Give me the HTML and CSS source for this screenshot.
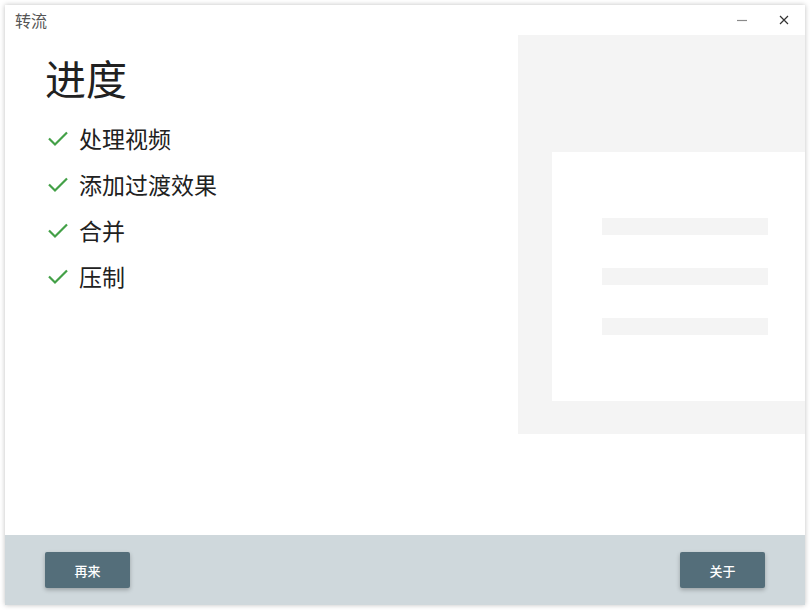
FILE: index.html
```html
<!DOCTYPE html>
<html lang="zh">
<head>
    <meta charset="UTF-8">
    <title>转流</title>
    <link rel="stylesheet" href="styles.css">
</head>
<body>
    <div class="window">
        <div class="titlebar">
            <span class="title">转流</span>
            <div class="controls">
                <span class="ctl ctl-min"><svg width="12" height="12" viewBox="0 0 12 12"><line x1="1" y1="6.5" x2="11" y2="6.5" stroke="#8a8a8a" stroke-width="1.2"/></svg></span>
                <span class="ctl ctl-close"><svg width="12" height="12" viewBox="0 0 12 12"><path d="M2 2 L10 10 M10 2 L2 10" stroke="#333" stroke-width="1.2"/></svg></span>
            </div>
        </div>

        <div class="main">
            <div class="progress">
                <h1>进度</h1>
                <ul class="steps">
                    <li><svg class="check" viewBox="0 0 24 24"><path d="M3 12.5 L9 18.5 L21 6.5" fill="none" stroke="#43a047" stroke-width="2.2"/></svg>处理视频</li>
                    <li><svg class="check" viewBox="0 0 24 24"><path d="M3 12.5 L9 18.5 L21 6.5" fill="none" stroke="#43a047" stroke-width="2.2"/></svg>添加过渡效果</li>
                    <li><svg class="check" viewBox="0 0 24 24"><path d="M3 12.5 L9 18.5 L21 6.5" fill="none" stroke="#43a047" stroke-width="2.2"/></svg>合并</li>
                    <li><svg class="check" viewBox="0 0 24 24"><path d="M3 12.5 L9 18.5 L21 6.5" fill="none" stroke="#43a047" stroke-width="2.2"/></svg>压制</li>
                </ul>
            </div>

            <!-- aperçu -->
            <div class="preview">
                <div class="card">
                    <div class="bar"></div>
                    <div class="bar"></div>
                    <div class="bar"></div>
                </div>
            </div>
        </div>

        <div class="footer">
            <button class="btn">再来</button>
            <button class="btn">关于</button>
        </div>
    </div>
</body>
</html>
```

FILE: styles.css
```css
body {
    margin: 0;
    padding: 5px;
    background-color: #fff;
    font-family: "Noto Sans CJK SC", "Noto Sans", sans-serif;
}
.window {
    width: 800px;
    height: 600px;
    display: flex;
    flex-direction: column;
    background-color: #fff;
    box-shadow: 0 0 5px rgba(0, 0, 0, 0.25);
}
.titlebar {
    height: 30px;
    display: flex;
    align-items: center;
    justify-content: space-between;
    padding-left: 10px;
}
.title {
    font-size: 16px;
    color: #555;
}
.controls {
    display: flex;
    height: 100%;
}
.ctl {
    width: 42px;
    display: flex;
    align-items: center;
    justify-content: center;
}
.main {
    flex: 1;
    display: flex;
    justify-content: space-between;
}
.progress {
    padding: 12px 0 0 40px;
}
h1 {
    margin: 0 0 8px 0;
    font-size: 41px;
    font-weight: normal;
    color: #212121;
    line-height: 60px;
}
.steps {
    list-style: none;
    margin: 0;
    padding: 0;
}
.steps li {
    display: flex;
    align-items: center;
    height: 46px;
    font-size: 23px;
    color: #212121;
}
.check {
    width: 24px;
    height: 24px;
    margin: 0 9px 0 1px;
}
.preview {
    width: 287px;
    height: 399px;
    box-sizing: border-box;
    padding: 117px 0 33px 34px;
    background-color: #f4f4f4;
}
.card {
    height: 100%;
    box-sizing: border-box;
    padding: 66px 0 0 50px;
    background-color: #fff;
    display: flex;
    flex-direction: column;
    gap: 33px;
}
.bar {
    width: 166px;
    height: 17px;
    background-color: #f4f4f4;
}
.footer {
    height: 70px;
    background-color: #cfd8dc;
    display: flex;
    align-items: center;
    justify-content: space-between;
    padding: 0 40px;
}
.btn {
    width: 85px;
    height: 36px;
    border: none;
    border-radius: 2px;
    background-color: #546e7a;
    color: #fff;
    font-family: "Noto Sans CJK SC", sans-serif;
    font-size: 13px;
    font-weight: 500;
    box-shadow: 0 2px 4px rgba(0, 0, 0, 0.25);
}
```
